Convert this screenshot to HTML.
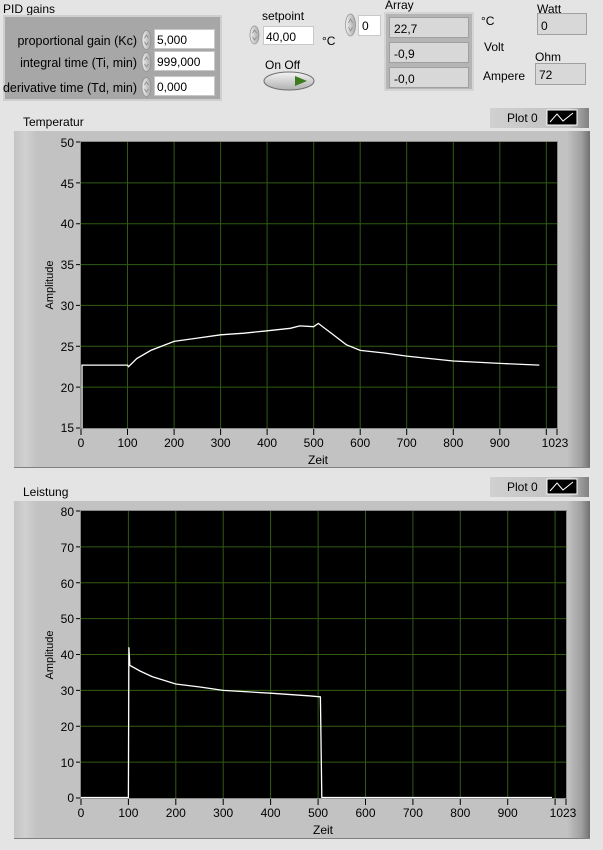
<!DOCTYPE html>
<html><head><meta charset="utf-8"><style>
html,body{margin:0;padding:0;background:#e4e4e4;}
svg{display:block;font-family:"Liberation Sans",sans-serif;}
</style></head><body>
<svg width="603" height="850" viewBox="0 0 603 850" xmlns="http://www.w3.org/2000/svg">
<defs>
<linearGradient id="spin" x1="0" x2="1"><stop offset="0" stop-color="#f0f0f0"/><stop offset="1" stop-color="#a8a8a8"/></linearGradient>
<linearGradient id="led" x1="0" y1="0" x2="0" y2="1"><stop offset="0" stop-color="#f4f4f4"/><stop offset="1" stop-color="#b0b0b0"/></linearGradient>
<linearGradient id="fr" x1="0" x2="1"><stop offset="0" stop-color="#c4c4c4"/><stop offset="0.02" stop-color="#d0d0d0"/><stop offset="0.04" stop-color="#c2c2c2"/><stop offset="0.96" stop-color="#c2c2c2"/><stop offset="0.985" stop-color="#a0a0a0"/><stop offset="1" stop-color="#707070"/></linearGradient>
<linearGradient id="pl" x1="0" x2="1"><stop offset="0" stop-color="#d0d0d0"/><stop offset="0.8" stop-color="#c0c0c0"/><stop offset="1" stop-color="#808080"/></linearGradient>
</defs>
<rect width="603" height="850" fill="#e4e4e4"/>
<!-- PID gains -->
<text x="3" y="13" font-size="12" fill="#000">PID gains</text>
<rect x="3" y="15" width="219" height="86" fill="#cfcfcf"/>
<rect x="5" y="17" width="215" height="82" fill="#a7a7a7"/>
<g font-size="12.5" fill="#000" text-anchor="end">
<text x="137" y="45">proportional gain (Kc)</text>
<text x="137" y="67">integral time (Ti, min)</text>
<text x="137" y="92">derivative time (Td, min)</text>
</g>
<g fill="url(#spin)" stroke="#909090" stroke-width="0.7">
<ellipse cx="146.5" cy="40" rx="4.5" ry="9.5"/><ellipse cx="146.5" cy="62" rx="4.5" ry="9.5"/><ellipse cx="146.5" cy="87" rx="4.5" ry="9.5"/>
<ellipse cx="254.5" cy="35" rx="4.5" ry="9"/><ellipse cx="350.5" cy="25" rx="5" ry="11"/>
</g>
<g stroke="#888" stroke-width="0.8" fill="none">
<path d="M144.5 38l2-3 2 3M144.5 42l2 3 2-3M144.5 60l2-3 2 3M144.5 64l2 3 2-3M144.5 85l2-3 2 3M144.5 89l2 3 2-3M252.5 33l2-3 2 3M252.5 37l2 3 2-3M348.5 23l2-4 2 4M348.5 27l2 4 2-4"/>
</g>
<g fill="#fff" stroke="#c8c8c8">
<rect x="154.5" y="29.5" width="60" height="19"/><rect x="154.5" y="51.5" width="60" height="19"/><rect x="154.5" y="76.5" width="60" height="19"/>
<rect x="263.5" y="26.5" width="50" height="18"/><rect x="358.5" y="15.5" width="22" height="20"/>
</g>
<g font-size="12" fill="#000">
<text x="157" y="44">5,000</text><text x="157" y="66">999,000</text><text x="157" y="91">0,000</text>
<text x="266" y="41">40,00</text><text x="362" y="30">0</text>
<text x="262" y="20">setpoint</text><text x="265" y="69">On Off</text>
<text x="322" y="45">°C</text>
<text x="385" y="9">Array</text>
<text x="481" y="25">°C</text><text x="484" y="51">Volt</text><text x="483" y="80">Ampere</text>
<text x="537" y="13">Watt</text><text x="535" y="61">Ohm</text>
</g>
<!-- On Off button -->
<ellipse cx="289" cy="81" rx="25" ry="9" fill="url(#led)" stroke="#707070"/>
<path d="M295 76 L307 81 L295 86 Z" fill="#3e7a1e"/>
<!-- Array -->
<rect x="385" y="13" width="88" height="77" fill="#b5b5b5" stroke="#d4d4d4" stroke-width="2"/>
<g fill="#d8d8d8" stroke="#a0a0a0">
<rect x="389.5" y="17.5" width="79" height="20"/><rect x="389.5" y="42.5" width="79" height="20"/><rect x="389.5" y="67.5" width="79" height="20"/>
<rect x="537.5" y="13.5" width="49" height="21"/><rect x="535.5" y="63.5" width="50" height="21"/>
</g>
<g font-size="12" fill="#000">
<text x="394" y="33">22,7</text><text x="394" y="58">-0,9</text><text x="394" y="83">-0,0</text>
<text x="541" y="30">0</text><text x="539" y="79">72</text>
</g>
<!-- chart 1 -->
<text x="23" y="126" font-size="12" fill="#000">Temperatur</text>
<rect x="490" y="108" width="99" height="20" fill="url(#pl)"/>
<text x="507" y="122" font-size="12" fill="#000">Plot 0</text>
<rect x="547" y="110" width="30" height="15" fill="#000" stroke="#fff"/>
<path d="M550 122 L557 114 L563 121 L573 113" stroke="#fff" fill="none"/>
<rect x="14" y="131" width="576" height="337" fill="url(#fr)"/>
<line x1="14" y1="467.5" x2="590" y2="467.5" stroke="#808080"/>
<rect x="80" y="141" width="478" height="288" fill="#8a8a8a"/>
<rect x="81" y="142" width="476" height="286" fill="#000"/>
<g stroke="#2f5c10" stroke-width="1">
<path d="M127.5 142V428M174.1 142V428M220.6 142V428M267.1 142V428M313.7 142V428M360.2 142V428M406.7 142V428M453.3 142V428M499.8 142V428M546.3 142V428"/>
<path d="M81 182.9H557M81 223.7H557M81 264.6H557M81 305.4H557M81 346.3H557M81 387.1H557"/>
</g>
<polyline fill="none" stroke="#fff" stroke-width="1.3" points="82,428 82,365.1 127.5,365.1 128.5,366.7 136.8,358.5 150.8,350.4 174.1,341.4 197.3,338.1 220.6,334.8 243.9,333.2 267.1,330.8 290.4,328.3 299.7,325.9 313.7,326.7 318.3,323.4 332.3,334 346.2,344.7 360.2,350.4 383.4,352.9 406.7,356.1 453.2,361 499.8,363.4 539.3,365.1"/>
<g stroke="#000"><path d="M76 142H80M76 182.9H80M76 223.7H80M76 264.6H80M76 305.4H80M76 346.3H80M76 387.1H80M76 428H80"/>
<path d="M81 429V435M127.5 429V435M174.1 429V435M220.6 429V435M267.1 429V435M313.7 429V435M360.2 429V435M406.7 429V435M453.3 429V435M499.8 429V435M546.3 429V435M557 429V435"/></g>
<g font-size="12" fill="#000" text-anchor="end">
<text x="74" y="147">50</text><text x="74" y="188">45</text><text x="74" y="228">40</text><text x="74" y="269">35</text><text x="74" y="310">30</text><text x="74" y="351">25</text><text x="74" y="392">20</text><text x="74" y="432">15</text>
</g>
<g font-size="12" fill="#000" text-anchor="middle">
<text x="81" y="447">0</text><text x="127.5" y="447">100</text><text x="174.1" y="447">200</text><text x="220.6" y="447">300</text><text x="267.1" y="447">400</text><text x="313.7" y="447">500</text><text x="360.2" y="447">600</text><text x="406.7" y="447">700</text><text x="453.3" y="447">800</text><text x="499.8" y="447">900</text><text x="555" y="447">1023</text>
<text x="318" y="464">Zeit</text>
<text transform="translate(53,285) rotate(-90)" font-size="11">Amplitude</text>
</g>
<!-- chart 2 -->
<text x="23" y="496" font-size="12" fill="#000">Leistung</text>
<rect x="490" y="477" width="99" height="20" fill="url(#pl)"/>
<text x="507" y="491" font-size="12" fill="#000">Plot 0</text>
<rect x="547" y="479" width="30" height="15" fill="#000" stroke="#fff"/>
<path d="M550 491 L557 483 L563 490 L573 482" stroke="#fff" fill="none"/>
<rect x="14" y="501" width="576" height="338" fill="url(#fr)"/>
<line x1="14" y1="838.5" x2="590" y2="838.5" stroke="#808080"/>
<rect x="80" y="510" width="487" height="289" fill="#8a8a8a"/>
<rect x="81" y="511" width="485" height="287" fill="#000"/>
<g stroke="#2f5c10" stroke-width="1">
<path d="M128.4 511V798M175.8 511V798M223.2 511V798M270.6 511V798M318.1 511V798M365.5 511V798M412.9 511V798M460.3 511V798M507.7 511V798M555.1 511V798"/>
<path d="M81 546.9H566M81 582.8H566M81 618.6H566M81 654.5H566M81 690.4H566M81 726.3H566M81 762.1H566"/>
</g>
<polyline fill="none" stroke="#fff" stroke-width="1.3" points="81,797.5 128.4,797.5 128.9,647.3 129.8,665.3 140,671 152.1,676.6 175.8,684 200,687 223.2,690.4 270.6,693.2 308.6,695.8 320.4,696.8 321.8,797.5 552,797.5"/>
<g stroke="#000"><path d="M76 511H80M76 546.9H80M76 582.8H80M76 618.6H80M76 654.5H80M76 690.4H80M76 726.3H80M76 762.1H80M76 798H80"/>
<path d="M81 799V805M128.4 799V805M175.8 799V805M223.2 799V805M270.6 799V805M318.1 799V805M365.5 799V805M412.9 799V805M460.3 799V805M507.7 799V805M555.1 799V805M566 799V805"/></g>
<g font-size="12" fill="#000" text-anchor="end">
<text x="74" y="516">80</text><text x="74" y="552">70</text><text x="74" y="588">60</text><text x="74" y="623">50</text><text x="74" y="659">40</text><text x="74" y="695">30</text><text x="74" y="731">20</text><text x="74" y="767">10</text><text x="74" y="802">0</text>
</g>
<g font-size="12" fill="#000" text-anchor="middle">
<text x="81" y="817">0</text><text x="128.4" y="817">100</text><text x="175.8" y="817">200</text><text x="223.2" y="817">300</text><text x="270.6" y="817">400</text><text x="318.1" y="817">500</text><text x="365.5" y="817">600</text><text x="412.9" y="817">700</text><text x="460.3" y="817">800</text><text x="507.7" y="817">900</text><text x="563" y="817">1023</text>
<text x="323" y="834">Zeit</text>
<text transform="translate(53,655) rotate(-90)" font-size="11">Amplitude</text>
</g>
</svg>
</body></html>
